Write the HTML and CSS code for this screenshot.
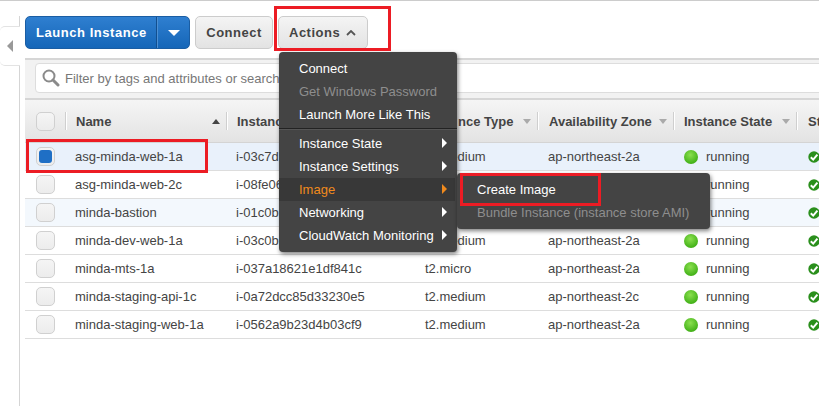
FILE: index.html
```html
<!DOCTYPE html>
<html lang="en">
<head>
<meta charset="utf-8">
<title>Instances</title>
<link rel="stylesheet" href="styles.css">
</head>
<body>
<div class="app">
  <aside class="side">
    <div class="side-tab"><span class="side-arrow"></span></div>
  </aside>
  <main class="main">
    <div class="toolbar">
      <div class="launch">
        <span class="launch-label">Launch Instance</span>
        <span class="launch-caret"><span class="caret-down"></span></span>
      </div>
      <button class="btn connect-btn">Connect</button>
      <button class="btn actions-btn">Actions
        <svg class="chev" width="10" height="6" viewBox="0 0 10 6"><path d="M1 5 L5 1 L9 5" fill="none" stroke="#555" stroke-width="1.8"/></svg>
      </button>
    </div>
    <div class="panel">
      <div class="searchband">
        <div class="search">
          <svg class="mag" width="18" height="18" viewBox="0 0 18 18"><circle cx="7" cy="7" r="5.5" fill="#fff" stroke="#8a8a8a" stroke-width="2"/><path d="M11 11 L16 16" stroke="#8a8a8a" stroke-width="3" stroke-linecap="round"/></svg>
          <span class="search-text">Filter by tags and attributes or search</span>
        </div>
      </div>
      <div class="table">
        <div class="row head">
          <div class="cell c-check"><span class="check"></span></div>
          <div class="cell c-name">Name<span class="sort up"></span></div>
          <div class="cell c-id">Instanc</div>
          <div class="cell c-type"><span class="type-tail">nce Type</span><span class="sort"></span></div>
          <div class="cell c-az">Availability Zone<span class="sort"></span></div>
          <div class="cell c-state">Instance State<span class="sort"></span></div>
          <div class="cell c-status">St</div>
        </div>
        <div class="row selected">
          <div class="cell c-check"><span class="check on"></span></div>
          <div class="cell c-name">asg-minda-web-1a</div><div class="cell c-id">i-03c7d</div><div class="cell c-type">t2.medium</div><div class="cell c-az">ap-northeast-2a</div>
          <div class="cell c-state"><span class="dot"></span>running</div><div class="cell c-status"><svg class="ok" viewBox="0 0 12 12"><circle cx="6" cy="6" r="5.7" fill="#2a8f1c"/><path d="M2.8 6.2 L5.2 8.6 L9.4 3.7" fill="none" stroke="#fff" stroke-width="2"/></svg></div>
        </div>
        <div class="row">
          <div class="cell c-check"><span class="check"></span></div>
          <div class="cell c-name">asg-minda-web-2c</div><div class="cell c-id">i-08fe06</div><div class="cell c-type"></div><div class="cell c-az"></div>
          <div class="cell c-state"><span class="dot"></span>running</div><div class="cell c-status"><svg class="ok" viewBox="0 0 12 12"><circle cx="6" cy="6" r="5.7" fill="#2a8f1c"/><path d="M2.8 6.2 L5.2 8.6 L9.4 3.7" fill="none" stroke="#fff" stroke-width="2"/></svg></div>
        </div>
        <div class="row tinted">
          <div class="cell c-check"><span class="check"></span></div>
          <div class="cell c-name">minda-bastion</div><div class="cell c-id">i-01c0b</div><div class="cell c-type"></div><div class="cell c-az"></div>
          <div class="cell c-state"><span class="dot"></span>running</div><div class="cell c-status"><svg class="ok" viewBox="0 0 12 12"><circle cx="6" cy="6" r="5.7" fill="#2a8f1c"/><path d="M2.8 6.2 L5.2 8.6 L9.4 3.7" fill="none" stroke="#fff" stroke-width="2"/></svg></div>
        </div>
        <div class="row">
          <div class="cell c-check"><span class="check"></span></div>
          <div class="cell c-name">minda-dev-web-1a</div><div class="cell c-id">i-03c0b</div><div class="cell c-type">t2.medium</div><div class="cell c-az">ap-northeast-2a</div>
          <div class="cell c-state"><span class="dot"></span>running</div><div class="cell c-status"><svg class="ok" viewBox="0 0 12 12"><circle cx="6" cy="6" r="5.7" fill="#2a8f1c"/><path d="M2.8 6.2 L5.2 8.6 L9.4 3.7" fill="none" stroke="#fff" stroke-width="2"/></svg></div>
        </div>
        <div class="row">
          <div class="cell c-check"><span class="check"></span></div>
          <div class="cell c-name">minda-mts-1a</div><div class="cell c-id">i-037a18621e1df841c</div><div class="cell c-type">t2.micro</div><div class="cell c-az">ap-northeast-2a</div>
          <div class="cell c-state"><span class="dot"></span>running</div><div class="cell c-status"><svg class="ok" viewBox="0 0 12 12"><circle cx="6" cy="6" r="5.7" fill="#2a8f1c"/><path d="M2.8 6.2 L5.2 8.6 L9.4 3.7" fill="none" stroke="#fff" stroke-width="2"/></svg></div>
        </div>
        <div class="row">
          <div class="cell c-check"><span class="check"></span></div>
          <div class="cell c-name">minda-staging-api-1c</div><div class="cell c-id">i-0a72dcc85d33230e5</div><div class="cell c-type">t2.medium</div><div class="cell c-az">ap-northeast-2c</div>
          <div class="cell c-state"><span class="dot"></span>running</div><div class="cell c-status"><svg class="ok" viewBox="0 0 12 12"><circle cx="6" cy="6" r="5.7" fill="#2a8f1c"/><path d="M2.8 6.2 L5.2 8.6 L9.4 3.7" fill="none" stroke="#fff" stroke-width="2"/></svg></div>
        </div>
        <div class="row">
          <div class="cell c-check"><span class="check"></span></div>
          <div class="cell c-name">minda-staging-web-1a</div><div class="cell c-id">i-0562a9b23d4b03cf9</div><div class="cell c-type">t2.medium</div><div class="cell c-az">ap-northeast-2a</div>
          <div class="cell c-state"><span class="dot"></span>running</div><div class="cell c-status"><svg class="ok" viewBox="0 0 12 12"><circle cx="6" cy="6" r="5.7" fill="#2a8f1c"/><path d="M2.8 6.2 L5.2 8.6 L9.4 3.7" fill="none" stroke="#fff" stroke-width="2"/></svg></div>
        </div>
      </div>
    </div>
  </main>
</div>

<nav class="menu">
  <div class="item">Connect</div>
  <div class="item off">Get Windows Password</div>
  <div class="item">Launch More Like This</div>
  <div class="divider"></div>
  <div class="item sub">Instance State<span class="tri"></span></div>
  <div class="item sub">Instance Settings<span class="tri"></span></div>
  <div class="item sub hot">Image<span class="tri"></span></div>
  <div class="item sub">Networking<span class="tri"></span></div>
  <div class="item sub">CloudWatch Monitoring<span class="tri"></span></div>
</nav>
<nav class="submenu">
  <div class="subitem">Create Image</div>
  <div class="subitem off">Bundle Instance (instance store AMI)</div>
</nav>

<div class="mark mark-actions"></div>
<div class="mark mark-row"></div>
<div class="mark mark-create"></div>
</body>
</html>
```

FILE: styles.css
```css
* { box-sizing: border-box; }
html, body { margin: 0; height: 100%; overflow: hidden; background: #fff; }
body { font-family: "Liberation Sans", Arial, sans-serif; font-size: 13px; color: #444; position: relative; border-top: 1px solid #ccc; }

.app { display: flex; height: 405px; }
.side { width: 20px; flex: none; border-right: 1px solid #d5d5d5; margin-top: 15px; padding-top: 10px; }
.side-tab { width: 20px; height: 40px; background: #fff; border: 1px solid #e3e3e3; border-right: 0; border-left: 0; border-radius: 5px 0 0 5px; display: flex; align-items: center; padding-left: 7px; }
.side-arrow { width: 0; height: 0; border: 6px solid transparent; border-left: 0; border-right: 6px solid #999; }

.main { flex: 1; min-width: 0; padding-left: 5px; overflow: hidden; }
.toolbar { display: flex; height: 57px; padding-top: 15px; gap: 5px; }
.launch { display: flex; height: 33px; width: 165px; border-radius: 5px; background: linear-gradient(#2f7fd0, #1566b8); border: 1px solid #1a5da3; color: #fff; font-weight: bold; font-size: 13px; letter-spacing: .55px; line-height: 31px; }
.launch-label { width: 131px; padding-left: 10px; border-right: 1px solid #124f8f; white-space: nowrap; }
.launch-caret { flex: 1; border-left: 1px solid #4d90d4; display: flex; align-items: center; justify-content: center; }
.caret-down { width: 0; height: 0; border: 6px solid transparent; border-bottom: 0; border-top: 6px solid #fff; }
.btn { height: 33px; padding: 0; border: 1px solid #ccc; border-radius: 5px; background: linear-gradient(#f4f4f4, #e3e3e3); font: bold 13px "Liberation Sans", Arial, sans-serif; letter-spacing: .5px; color: #444; }
.connect-btn { width: 78px; }
.actions-btn { width: 90px; display: flex; align-items: center; padding-left: 10px; gap: 6px; }
.chev { flex: none; }

.panel { width: 794px; }
.searchband { height: 42px; border-top: 2px solid #d6d6d6; border-bottom: 2px solid #d6d6d6; background: #f2f2f2; padding: 3px 0 0 10px; overflow: hidden; }
.search { display: flex; align-items: center; height: 30px; width: 800px; background: #fff; border: 1px solid #ddd; border-radius: 4px; padding-left: 6px; gap: 5px; font-size: 13px; color: #777; white-space: nowrap; overflow: hidden; }
.mag { flex: none; }

.table { width: 794px; overflow: hidden; }
.row { display: grid; grid-template-columns: 41px 161px 188px 123px 136px 123px 128px; width: 900px; height: 28px; border-bottom: 1px solid #ddd; align-items: center; }
.cell { padding-left: 10px; white-space: nowrap; display: flex; align-items: center; }
.c-check { padding-left: 11px; }
.c-name, .c-id { padding-left: 9px; }
.c-status { padding-left: 11px; }
.head { height: 43px; background: linear-gradient(#f5f5f5, #e3e3e3); border-bottom: 1px solid #d4d4d4; font-weight: bold; color: #444; }
.head .cell { height: 18px; border-right: 1px solid #cfcfcf; position: relative; box-shadow: 1px 0 0 #fff; }
.head .c-name, .head .c-id { padding-left: 10px; }
.head .c-type { padding-left: 43px; }
.head .c-az { padding-left: 11px; }
.head .c-status { border-right: 0; box-shadow: none; }
.selected { background: #e9f1fb; }
.tinted { background: #f3f8fd; }
.check { width: 19px; height: 19px; background: linear-gradient(#f5f5f5, #ececec); border: 1px solid #d0d0d0; border-radius: 5px; display: block; position: relative; flex: none; }
.check.on::after { content: ""; position: absolute; left: 2px; top: 2px; width: 13px; height: 13px; border-radius: 3px; background: #1f6fc5; }
.sort { position: absolute; right: 6px; top: 7px; width: 0; height: 0; border: 4px solid transparent; border-bottom: 0; border-top: 5px solid #aaa; }
.sort.up { border-top: 0; border-bottom: 5px solid #444; }
.dot { width: 14px; height: 14px; border-radius: 50%; margin-right: 8px; background: radial-gradient(circle at 45% 35%, #8be04f, #45b31a 70%, #37970f); flex: none; }
.ok { width: 12px; height: 12px; display: block; }

.menu, .submenu { position: absolute; background: #444; border-radius: 4px; box-shadow: 1px 2px 4px rgba(0,0,0,.5); color: #fff; font-size: 13px; }
.menu { left: 279px; top: 51px; width: 178px; height: 200px; padding-top: 5px; }
.item { height: 23px; line-height: 23px; padding-left: 20px; position: relative; white-space: nowrap; }
.item.off, .subitem.off { color: #8e8e8e; }
.divider { height: 2px; margin-top: 2px; margin-bottom: 2px; border-top: 1px solid #222; border-bottom: 1px solid #555; }
.hot { color: #f08a1d; background: #383838; width: 176px; }
.tri { position: absolute; left: 163px; top: 6px; width: 0; height: 0; border: 5px solid transparent; border-right: 0; border-left: 5px solid #fff; }
.hot .tri { border-left-color: #f08a1d; }
.submenu { left: 457px; top: 172px; width: 253px; height: 56px; padding-top: 5px; z-index: 1; }
.subitem { height: 23px; line-height: 23px; padding-left: 20px; white-space: nowrap; }

.mark { position: absolute; border: 3px solid #ec1c24; z-index: 3; pointer-events: none; }
.mark-actions { left: 274px; top: 5px; width: 117px; height: 45px; }
.mark-row { left: 26px; top: 138px; width: 182px; height: 34px; }
.mark-create { left: 460px; top: 172px; width: 141px; height: 33px; }
```
